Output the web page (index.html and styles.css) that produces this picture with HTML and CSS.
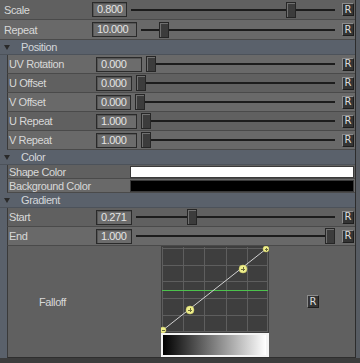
FILE: index.html
```html
<!DOCTYPE html>
<html lang="en">
<head>
    <meta charset="UTF-8">
    <meta name="viewport" content="width=device-width, initial-scale=1.0">
    <title>Texture attributes</title>
    <link rel="stylesheet" href="styles.css">
</head>
<body>
  <div class="panel">
    <div class="row dark">
      <span class="label">Scale</span>
      <span class="field w35">0.800</span>
      <div class="slider" style="--v:0.8"><span class="handle"></span></div>
      <button class="reset">R</button>
    </div>
    <div class="row">
      <span class="label">Repeat</span>
      <span class="field w45">10.000</span>
      <div class="slider" style="--v:0.1"><span class="handle"></span></div>
      <button class="reset">R</button>
    </div>

    <div class="header"><span class="tri"></span>Position</div>
    <div class="group">
      <div class="row">
        <span class="label">UV Rotation</span>
        <span class="field w46">0.000</span>
        <div class="slider" style="--v:0"><span class="handle"></span></div>
        <button class="reset">R</button>
      </div>
      <div class="row dark">
        <span class="label">U Offset</span>
        <span class="field w36">0.000</span>
        <div class="slider" style="--v:0"><span class="handle"></span></div>
        <button class="reset">R</button>
      </div>
      <div class="row">
        <span class="label">V Offset</span>
        <span class="field w35">0.000</span>
        <div class="slider" style="--v:0"><span class="handle"></span></div>
        <button class="reset">R</button>
      </div>
      <div class="row dark">
        <span class="label">U Repeat</span>
        <span class="field w41">1.000</span>
        <div class="slider" style="--v:0"><span class="handle"></span></div>
        <button class="reset">R</button>
      </div>
      <div class="row">
        <span class="label">V Repeat</span>
        <span class="field w41">1.000</span>
        <div class="slider" style="--v:0"><span class="handle"></span></div>
        <button class="reset">R</button>
      </div>
    </div>

    <div class="header"><span class="tri"></span>Color</div>
    <div class="group">
      <div class="row short dark">
        <span class="label wide">Shape Color</span>
        <span class="swatch white"></span>
      </div>
      <div class="row short">
        <span class="label wide">Background Color</span>
        <span class="swatch black"></span>
      </div>
    </div>

    <div class="header"><span class="tri"></span>Gradient</div>
    <div class="group">
      <div class="row dark">
        <span class="label">Start</span>
        <span class="field w36">0.271</span>
        <div class="slider" style="--v:0.271"><span class="handle"></span></div>
        <button class="reset">R</button>
      </div>
      <div class="row">
        <span class="label">End</span>
        <span class="field w36">1.000</span>
        <div class="slider" style="--v:1"><span class="handle"></span></div>
        <button class="reset">R</button>
      </div>
      <div class="row falloff dark">
        <span class="label center">Falloff</span>
        <div class="curve">
          <svg class="graph" width="108" height="87" viewBox="0 0 108 87">
            <rect x="0" y="0" width="108" height="87" fill="#3e3e3e"/>
            <g stroke="#5e5e5e" stroke-width="1">
              <line x1="1.5" y1="1" x2="1.5" y2="86"/>
              <line x1="22.5" y1="1" x2="22.5" y2="86"/>
              <line x1="43.5" y1="1" x2="43.5" y2="86"/>
              <line x1="65.5" y1="1" x2="65.5" y2="86"/>
              <line x1="86.5" y1="1" x2="86.5" y2="86"/>
              <line x1="106.5" y1="1" x2="106.5" y2="86"/>
              <line x1="1" y1="2.5" x2="107" y2="2.5"/>
              <line x1="1" y1="19.5" x2="107" y2="19.5"/>
              <line x1="1" y1="35.5" x2="107" y2="35.5"/>
              <line x1="1" y1="52.5" x2="107" y2="52.5"/>
              <line x1="1" y1="69.5" x2="107" y2="69.5"/>
              <line x1="1" y1="85.5" x2="107" y2="85.5"/>
            </g>
            <line x1="1" y1="44.5" x2="107" y2="44.5" stroke="#4cc24c" stroke-width="1"/>
            <line x1="2" y1="84" x2="105" y2="3" stroke="#d2d2d2" stroke-width="1"/>
            <g fill="#eeee8c" stroke="#c8c860" stroke-width="0.5">
              <circle cx="2" cy="84" r="3"/>
              <circle cx="29" cy="64" r="4"/>
              <circle cx="82" cy="23" r="4"/>
              <circle cx="105" cy="3" r="3"/>
            </g>
            <g stroke="#6a6a3a" stroke-width="1">
              <line x1="27" y1="64.5" x2="31" y2="64.5"/>
              <line x1="29.5" y1="62" x2="29.5" y2="66"/>
              <line x1="80" y1="23.5" x2="84" y2="23.5"/>
              <line x1="82.5" y1="21" x2="82.5" y2="25"/>
              <line x1="104" y1="3.5" x2="107" y2="3.5"/>
              <line x1="105.5" y1="2" x2="105.5" y2="5"/>
              <line x1="1" y1="84.5" x2="4" y2="84.5"/>
            </g>
          </svg>
          <div class="ramp"></div>
        </div>
        <button class="reset lone">R</button>
      </div>
    </div>
  </div>
</body>
</html>
```

FILE: styles.css
```css
body{
  margin: 0;
  background-color: #3c3c3c;
  font-family: "Liberation Sans", Arial, sans-serif;
  font-size: 11px;
  letter-spacing: -0.4px;
  color: #d8d8d8;
  height: 363px;
  overflow: hidden;
}
.panel{
  width: 355px;
  border-right: 1px solid #2c2c2c;
  box-shadow: 4px 0 0 #575c63;
  background-color: #5a616b;
}
.row{
  display: flex;
  align-items: center;
  height: 19px;
  border-bottom: 1px solid #4a4a4a;
  background-color: #696969;
}
.row.dark{
  background-color: #606060;
}
.group{
  padding-left: 7px;
  background-color: #5a616b;
}
.group .row{
  border-left: 1px solid #3a3a3a;
  height: 18px;
}
.group .row.short{
  height: 13px;
}
.label{
  width: 88px;
  padding-left: 4px;
  flex: none;
  white-space: nowrap;
}
.group .label{
  width: 87px;
  padding-left: 1px;
}
.group .label.wide{
  width: 121px;
}
.label.center{
  text-align: center;
}
.field{
  flex: none;
  box-sizing: border-box;
  height: 15px;
  line-height: 13px;
  padding-left: 4px;
  background-color: #6c6c6c;
  border: 1px solid #2a2a2a;
  box-shadow: inset 1px 1px 0 #555;
  color: #e4e4e4;
}
.w35{ width: 35px; }
.w36{ width: 36px; }
.w41{ width: 41px; }
.w45{ width: 45px; }
.w46{ width: 46px; }
.slider{
  flex: 1;
  position: relative;
  height: 16px;
  margin-left: 4px;
  margin-right: 7px;
}
.slider::before{
  content: "";
  position: absolute;
  left: 0;
  right: 0;
  top: 7px;
  height: 2px;
  background-color: #1c1c1c;
}
.handle{
  position: absolute;
  top: 0;
  left: calc((100% - 10px) * var(--v));
  box-sizing: border-box;
  width: 10px;
  height: 16px;
  background-color: #3c3c3c;
  border: 1px solid #262626;
  box-shadow: inset 1px 1px 0 #707070;
}
.reset{
  flex: none;
  box-sizing: border-box;
  width: 12px;
  height: 13px;
  margin-right: 1px;
  padding: 0;
  font-family: "DejaVu Sans", sans-serif;
  font-size: 10px;
  line-height: 10px;
  color: #dcdcdc;
  background-color: #343434;
  border: 1px solid;
  border-color: #8c8c8c #1e1e1e #1e1e1e #8c8c8c;
}
.swatch{
  flex: 1;
  height: 10px;
  margin-right: 1px;
  border: 1px solid #3a3a3a;
}
.swatch.white{ background-color: #ffffff; }
.swatch.black{ background-color: #000000; }
.header{
  display: flex;
  align-items: center;
  height: 14px;
  border-bottom: 1px solid #4c525a;
  background-color: #5a616b;
  color: #d4d6da;
}
.tri{
  width: 0;
  height: 0;
  margin-left: 4px;
  margin-right: 11px;
  border-left: 3px solid transparent;
  border-right: 3px solid transparent;
  border-top: 5px solid #2a2a2a;
}
.group .row.falloff{
  height: 111px;
  align-items: flex-start;
  border-bottom: 1px solid #2e2e2e;
}
.falloff .label{
  align-self: center;
}
.curve{
  display: flex;
  flex-direction: column;
  margin-left: 65px;
  background-color: #3e3e3e;
}
.graph{
  display: block;
}
.ramp{
  box-sizing: border-box;
  width: 108px;
  height: 24px;
  border: 2px solid #f4f4f4;
  border-right-width: 3px;
  background: linear-gradient(to right, #000000, #ffffff);
}
.reset.lone{
  align-self: center;
  margin-left: 38px;
}
```
